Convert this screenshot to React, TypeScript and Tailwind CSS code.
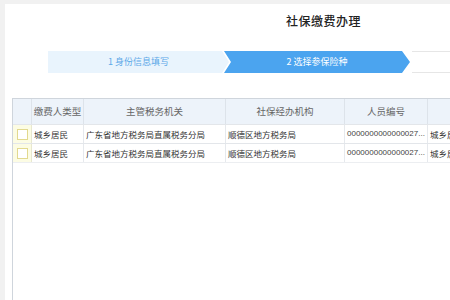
import React from "react";

const columns = [
  { title: "缴费人类型", w: "w-[52px]" },
  { title: "主管税务机关", w: "w-[142px]" },
  { title: "社保经办机构", w: "w-[119px]" },
  { title: "人员编号", w: "w-[83px]" },
  { title: "", w: "w-[80px]" },
];

const rows = [
  ["城乡居民", "广东省地方税务局直属税务分局", "顺德区地方税务局", "0000000000000027...", "城乡居民"],
  ["城乡居民", "广东省地方税务局直属税务分局", "顺德区地方税务局", "0000000000000027...", "城乡居民"],
];

const App = () => {
  return (
    <div
      className="flex h-[300px] w-[450px] overflow-hidden bg-[#f1f1f1] pl-[5px] pt-[4px]"
      style={{ fontFamily: '"Noto Sans CJK SC", "Liberation Sans", sans-serif' }}
    >
      <div className="flex flex-1 flex-col bg-white">
        {/* title */}
        <div className="flex h-[34px] items-center pl-[281px]">
          <h1 className="text-[12px] font-medium leading-none text-[#222] tracking-[0.5px]">
            社保缴费办理
          </h1>
        </div>

        {/* steps */}
        <div className="mt-[13px] flex h-[22px] pl-[43px]">
          <div className="flex w-[181px] shrink-0 items-center justify-center bg-[#e9f4fd] text-[9px] text-[#5ba8e8] [clip-path:polygon(0_0,calc(100%_-_7px)_0,100%_50%,calc(100%_-_7px)_100%,0_100%)]">
            1 身份信息填写
          </div>
          <div className="-ml-[5px] flex w-[186px] shrink-0 items-center justify-center bg-[#4ba4ef] text-[9px] text-white [clip-path:polygon(0_0,calc(100%_-_8px)_0,100%_50%,calc(100%_-_8px)_100%,0_100%,7px_50%)]">
            2 选择参保险种
          </div>
          <div className="ml-[2px] flex-1 border-y border-[#e6e6e6]"></div>
        </div>

        {/* table */}
        <div className="ml-[7px] mt-[25px] flex-1 border-l border-t border-[#cfd5dc]">
          <div className="flex h-[25px] bg-[#edf3fa] text-[9.5px] text-[#666]">
            <div className="w-[19px] shrink-0 border-r border-[#dde3ea]"></div>
            {columns.map((c, i) => (
              <div
                key={i}
                className={`${c.w} flex shrink-0 items-center justify-center border-r border-[#dde3ea]`}
              >
                {c.title}
              </div>
            ))}
          </div>
          {rows.map((r, ri) => (
            <div key={ri} className="flex h-[19px] border-t border-[#e3e6ea] text-[8.5px] text-[#333]">
              <div className="flex w-[19px] shrink-0 items-center justify-center border-r border-[#e8e8d0] bg-[#fcfce4]">
                <div className="h-[11px] w-[11px] border border-[#e2d98f] bg-white"></div>
              </div>
              {r.map((cell, ci) => (
                <div
                  key={ci}
                  className={`${columns[ci].w} flex shrink-0 items-center overflow-hidden whitespace-nowrap border-r border-[#e6e9ed] pl-[2px] ${
                    ci === 3 ? "font-['Liberation_Sans'] text-[8px] text-[#444]" : ""
                  }`}
                >
                  {cell}
                </div>
              ))}
            </div>
          ))}
          <div className="h-0 border-t border-[#eceef1]"></div>
        </div>
      </div>
    </div>
  );
};

export default App;
